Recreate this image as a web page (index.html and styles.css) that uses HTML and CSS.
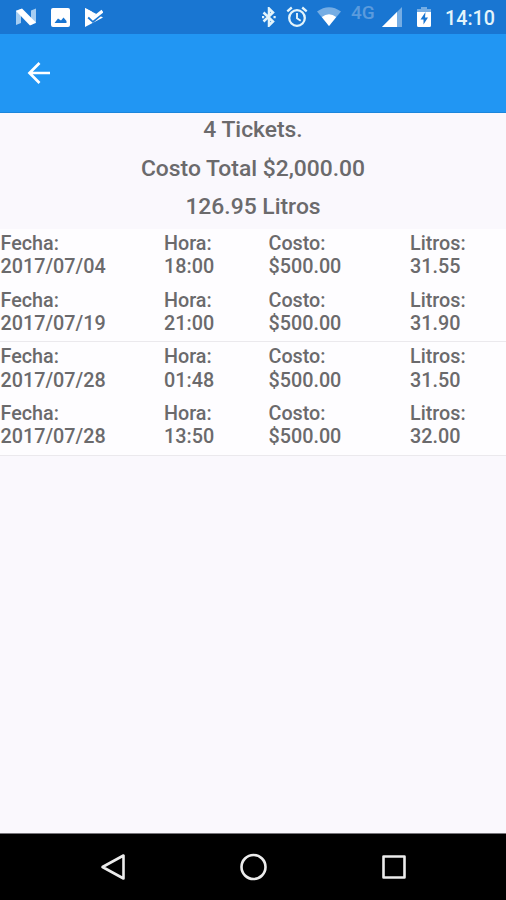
FILE: index.html
```html
<!DOCTYPE html>
<html lang="es">
<head>
    <meta charset="UTF-8">
    <meta name="viewport" content="width=device-width, initial-scale=1.0">
    <title>Tickets</title>
    <link rel="stylesheet" href="styles.css">
</head>
<body>
    <div class="status-bar">
        <div class="status-left">
            <svg width="20" height="18" viewBox="0 0 20 18">
                <path d="M0 2.500L5 1v14L0 17zM15 2.500l5-2V15l-5 2z" fill="#a5cdf2"/>
                <path d="M0 3L6 .5 20 14.500l-6 3z" fill="#fff"/>
            </svg>
            <svg width="19" height="19" viewBox="0 0 19 19">
                <path fill="#fff" fill-rule="evenodd" d="M2 0h15a2 2 0 0 1 2 2v15a2 2 0 0 1-2 2H2a2 2 0 0 1-2-2V2a2 2 0 0 1 2-2zM3.500 15h12v-2l-3-3.500-2.500 3-3-2z"/>
            </svg>
            <svg width="19" height="19" viewBox="0 0 19 19">
                <path d="M1 0l18 9.500L1 19z" fill="#fff"/>
                <path d="M5 8.500l4 3.500 9.500-8" fill="none" stroke="#1976d2" stroke-width="4.500"/>
                <path d="M1 0l7 3.700L4.500 8z" fill="#fff"/>
                <path d="M5 6.500l4 4L18.500 3" fill="none" stroke="#fff" stroke-width="3.200"/>
            </svg>
        </div>
        <div class="status-right">
            <svg class="bluetooth" width="14" height="20" viewBox="0 0 14 20">
                <path d="M1.500 5.500l9.500 9L7 18.500V1.500l4 4-9.500 9" fill="none" stroke="#e3f4fb" stroke-width="2.500"/>
                <path d="M0 9h2.200v2.200H0zM11.500 9h2.200v2.200h-2.200z" fill="#e3f4fb"/>
            </svg>
            <svg class="alarm" width="22" height="22" viewBox="0 0 22 22">
                <g fill="none" stroke="#e3f4fb" stroke-width="2.300">
                    <circle cx="11" cy="12" r="7.800"/>
                    <path d="M1.300 5.300l4.500-3.800M20.700 5.300l-4.500-3.800"/>
                    <path d="M11 7v5.300l3.700 2.500" stroke-width="1.900"/>
                </g>
            </svg>
            <svg class="wifi" width="24" height="20" viewBox="0 0 24 20">
                <path d="M0 4.500Q12-4 24 4.500L12 19z" fill="#75ade4"/>
                <path d="M4.800 10Q12 4.500 19.200 10L12 19z" fill="#fff"/>
            </svg>
            <span class="network">4G</span>
            <svg class="signal" width="20" height="20" viewBox="0 0 20 20">
                <path d="M20 0v20H0z" fill="#75ade4"/>
                <path d="M15 5v15H0z" fill="#fff"/>
            </svg>
            <svg class="battery" width="14" height="20" viewBox="0 0 14 20">
                <path d="M4 0h6v2h4v3H0V2h4z" fill="#75ade4"/>
                <path d="M0 5h14v13.500a1.500 1.500 0 0 1-1.500 1.500h-11A1.500 1.500 0 0 1 0 18.500z" fill="#fff"/>
                <path d="M8.500 5l-5 7.500h3v5l4.500-7H8z" fill="#1976d2"/>
            </svg>
            <span class="clock">14:10</span>
        </div>
    </div>

    <header class="toolbar">
        <svg width="24" height="24" viewBox="0 0 24 24">
            <path d="M12.500 2L2.500 12l10 10M2.500 12H23" fill="none" stroke="#fff" stroke-width="2.700"/>
        </svg>
    </header>

    <main class="content">
        <div class="summary">
            <div>4 Tickets.</div>
            <div>Costo Total $2,000.00</div>
            <div>126.95 Litros</div>
        </div>

        <div class="tickets">
            <div class="ticket">
                <div>Fecha:<br>2017/07/04</div>
                <div>Hora:<br>18:00</div>
                <div>Costo:<br>$500.00</div>
                <div>Litros:<br>31.55</div>
            </div>
            <div class="ticket divider">
                <div>Fecha:<br>2017/07/19</div>
                <div>Hora:<br>21:00</div>
                <div>Costo:<br>$500.00</div>
                <div>Litros:<br>31.90</div>
            </div>
            <div class="ticket">
                <div>Fecha:<br>2017/07/28</div>
                <div>Hora:<br>01:48</div>
                <div>Costo:<br>$500.00</div>
                <div>Litros:<br>31.50</div>
            </div>
            <div class="ticket divider">
                <div>Fecha:<br>2017/07/28</div>
                <div>Hora:<br>13:50</div>
                <div>Costo:<br>$500.00</div>
                <div>Litros:<br>32.00</div>
            </div>
        </div>
    </main>

    <nav class="nav-bar">
        <svg width="28" height="28" viewBox="0 0 28 28">
            <path d="M24.500 2.500v23L3.500 14z"/>
        </svg>
        <svg width="28" height="28" viewBox="0 0 28 28">
            <circle cx="13.500" cy="14" r="12"/>
        </svg>
        <svg width="28" height="28" viewBox="0 0 28 28">
            <rect x="3.500" y="3.500" width="21" height="21"/>
        </svg>
    </nav>
</body>
</html>
```

FILE: styles.css
```css
* {
    box-sizing: border-box;
}

body {
    margin: 0;
    height: 900px;
    display: flex;
    flex-direction: column;
    font-family: Roboto, sans-serif;
    font-weight: 500;
    color: #6b6a6c;
    background-color: #faf8fd;
    overflow: hidden;
}

svg {
    display: block;
    flex: none;
}

.status-bar {
    height: 34px;
    padding: 0 11px 0 16px;
    display: flex;
    justify-content: space-between;
    background-color: #1976d2;
}

.status-left {
    display: flex;
    align-items: center;
    gap: 14.5px;
}

.status-right {
    display: flex;
    align-items: center;
}

.alarm {
    margin-left: 10px;
}

.wifi {
    margin-left: 9px;
}

.network {
    width: 25px;
    margin: 0 6px 8px 10px;
    font-size: 19px;
    line-height: 18px;
    color: #5b9bdd;
}

.battery {
    margin-left: 15px;
}

.clock {
    margin-left: 14px;
    padding-top: 3px;
    font-size: 19.7px;
    line-height: 31px;
    color: #e3f4fb;
}

.toolbar {
    height: 79px;
    padding-left: 27px;
    display: flex;
    align-items: center;
    background-color: #2196f3;
    border-bottom: 1px solid #1b86dc;
}

.content {
    flex: 1;
}

.summary {
    height: 116px;
    text-align: center;
    font-size: 22.85px;
    line-height: 26px;
    padding-top: 4px;
}

.summary div {
    margin-bottom: 12.5px;
}

.tickets {
    background-color: #fefdff;
}

.ticket {
    height: 56.6px;
    padding: 3px 0 0 0.5px;
    display: grid;
    grid-template-columns: 163.5px 104.5px 141.5px 1fr;
    font-size: 19.75px;
    line-height: 23.3px;
}

.divider {
    height: 56.8px;
    border-bottom: 1px solid #ebe9ed;
}

.nav-bar {
    height: 67px;
    padding: 0 98px 1px 99px;
    display: flex;
    justify-content: space-between;
    align-items: center;
    background-color: #000;
    border-top: 1px solid #77757a;
}

.nav-bar svg {
    fill: none;
    stroke: #ececec;
    stroke-width: 2.6;
    stroke-linejoin: round;
}
```
